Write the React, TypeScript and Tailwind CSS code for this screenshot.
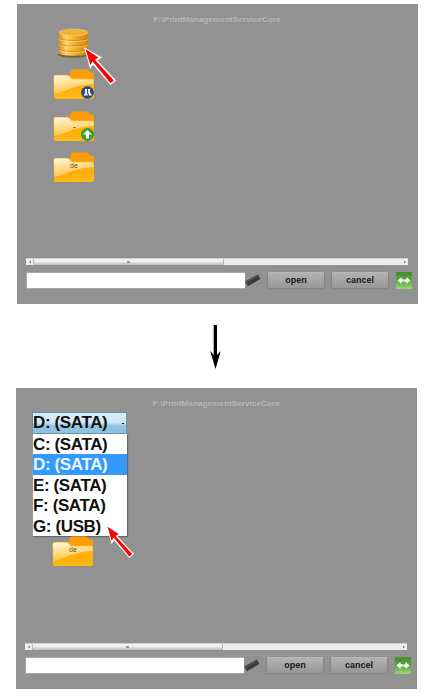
import React from "react";

function Database() {
  return (
    <svg className="block h-[31px] w-[33px]" viewBox="0 0 33 31">
      <defs>
        <linearGradient id="gold" x1="0" x2="1">
          <stop offset="0" stopColor="#d98f14" />
          <stop offset=".25" stopColor="#ffd56a" />
          <stop offset=".5" stopColor="#f7b32c" />
          <stop offset="1" stopColor="#c98212" />
        </linearGradient>
      </defs>
      <ellipse cx="15.500" cy="26.500" rx="15.5" ry="3.200" fill="#6b4a1c" opacity=".7" />
      <path d="M1 5V25C1 28.700 30 28.700 30 25V5Z" fill="url(#gold)" />
      <g fill="none">
        <path d="M1 10C1 13.200 30 13.200 30 10M1 15.500C1 18.700 30 18.700 30 15.500M1 21C1 24.200 30 24.200 30 21" stroke="#c07c14" strokeWidth=".7" />
        <path d="M1 11C1 14.200 30 14.200 30 11M1 16.500C1 19.700 30 19.700 30 16.500M1 22C1 25.200 30 25.200 30 22" stroke="#ffe08c" strokeWidth=".6" />
      </g>
      <ellipse cx="15.5" cy="4.500" rx="14.5" ry="3.3" fill="#f3b136" stroke="#f9d06c" strokeWidth=".7" />
    </svg>
  );
}

function Folder({ badge, label }: { badge?: "tools" | "up"; label?: string }) {
  return (
    <div className="relative h-[31px] w-[42px]">
      <svg className="block h-[31px] w-[42px]" viewBox="0 0 42 31">
        <defs>
          <linearGradient id="front" x1="0" y1="0" x2="0" y2="1">
            <stop offset="0" stopColor="#ffc02c" />
            <stop offset=".6" stopColor="#ffad08" />
            <stop offset="1" stopColor="#ffba18" />
          </linearGradient>
          <linearGradient id="shine" x1="0" y1="0" x2=".3" y2="1">
            <stop offset="0" stopColor="#fff8dc" />
            <stop offset="1" stopColor="#ffc445" />
          </linearGradient>
        </defs>
        <path d="M16 8L18 2Q18.500 0.500 20 0.500H34Q35.500 0.500 36 2L37 3.500H39.500Q41 3.500 41 5V14H16Z" fill="#ff9d05" />
        <path d="M.5 8Q.5 6 2.500 6H14.500Q16 6 17 7.500L18.500 9Q19 9.500 20 9.500H39Q41 9.500 41 11.500V28Q41 30 39 30H3Q1 30 1 28Z" fill="url(#front)" />
        <path d="M1 8Q1 6.500 2.500 6.500H14.500Q15.600 6.500 16.500 8L18 9.500Q18.500 10.200 20 10.200H39Q40.500 10.200 40.500 12V15Q27 15.500 18 19.500Q10 23 1.500 25Z" fill="url(#shine)" />
      </svg>
      {badge && (
        <svg className="absolute top-[17px] left-[28px] size-[13px]" viewBox="0 0 13 13">
          <circle cx="6.500" cy="6.500" r="6" fill={badge === "up" ? "#37a43c" : "#274c85"} stroke={badge === "up" ? "#2e7d28" : "#34466a"} strokeWidth=".7" />
          {badge === "up" ? (
            <path d="M6.500 2L10.700 6.500H8V10.500H5V6.500H2.300Z" fill="#fff" />
          ) : (
            <path d="M4 3H6V7L7 9.500H2.500L4 7ZM7 3H9V6L11 9.500H8L7 6Z" fill="#e4edf8" />
          )}
        </svg>
      )}
      {badge === "up" && <i className="absolute top-4 left-[20px] h-px w-[3px] bg-[#a07420]" />}
      {label && (
        <span className="absolute top-[9px] left-[17px] text-[7px] leading-[10px] text-[#65531f]">{label}</span>
      )}
    </div>
  );
}

function Pointer({ className }: { className: string }) {
  return (
    <svg className={"absolute " + className} viewBox="0 0 33 38">
      <path d="M0 0L18 10.500L13.300 13.200L32 33.500L26.500 38L9 17.500L6.200 22Z" fill="#fff" />
      <path d="M1.500 2L14.500 10.500L10.800 12.800L30 33.500L26.500 36.200L8.700 14.500L6.300 18Z" fill="#f50505" />
    </svg>
  );
}

function Swap() {
  return (
    <div className="ml-[7px] flex h-[17px] w-4 items-center justify-center bg-linear-to-b from-[#468c31] via-[#58a63d] to-[#9bd777]">
      <svg className="h-[9px] w-3.5" viewBox="0 0 14 9">
        <path d="M0.500 4.500L4.500 1V3.300H9.500V1L13.500 4.500L9.500 8V5.700H4.500V8Z" fill="#fff" />
        <path d="M6 6L8 3" stroke="#60a74b" strokeWidth=".8" />
      </svg>
    </div>
  );
}

function Controls() {
  const button =
    "flex h-[17px] w-[58px] items-center justify-center rounded-[2px] border border-[#858585] border-t-[#b8b8b8] bg-linear-to-b from-[#b2b2b2] to-[#979797] text-[9px] font-bold leading-none text-[#181818] shadow-[0_0_1px_#777]";
  return (
    <div className="ml-[9px]">
      <div className="flex h-[7px] w-[382px] items-center border-t border-[#d0d0d0] bg-[#ededed]">
        <div className="flex w-[7px] justify-center">
          <i className="block border-y-[1.5px] border-r-2 border-y-transparent border-r-[#555]" />
        </div>
        <div className="flex h-1.5 w-[191px] items-center justify-center border-x border-[#b8b8b8] bg-linear-to-b from-[#f0f0f0] from-40% to-[#b9b9b9]">
          <i className="block h-[2px] w-[3px] bg-[#999]" />
        </div>
        <div className="ml-auto flex w-[7px] justify-center">
          <i className="block border-y-[1.5px] border-l-2 border-y-transparent border-l-[#555]" />
        </div>
      </div>
      <div className="mt-[7px] flex">
        <div className="h-[17px] w-[219px] border border-r-0 border-[#aaa] bg-white" />
        <svg className="h-[17px] w-4" viewBox="0 0 16 17">
          <path d="M0.300 9.500L13 2.500L15.300 7L2.800 14.200Z" fill="#393939" />
          <path d="M0.300 9.500L13 2.500L13.900 4.200L1.300 11.200Z" fill="#505050" />
        </svg>
        <div className={button + " ml-[6px]"}>open</div>
        <div className={button + " ml-[6px]"}>cancel</div>
        <Swap />
      </div>
    </div>
  );
}

function Title() {
  return (
    <div className="h-6 pt-[10px] pl-[136.5px] text-[8px] leading-[12px] font-bold tracking-[0.13px] whitespace-nowrap text-[#b8b5bf]">
      F:\PrintManagementServiceCore
    </div>
  );
}

const drives = ["C: (SATA)", "D: (SATA)", "E: (SATA)", "F: (SATA)", "G: (USB)"];

export default function App() {
  return (
    <main className="h-[697px] w-[430px] overflow-hidden bg-white pt-1 font-['Liberation_Sans',Arial,sans-serif]">
      <section className="relative ml-[17px] flex h-[300px] w-[401px] flex-col bg-[#929292]">
        <Title />
        <div className="flex h-[230px] flex-col pl-[36px]">
          <div className="ml-[5px] h-[41px]">
            <Database />
          </div>
          <div className="flex flex-col gap-[10.5px]">
            <Folder badge="tools" />
            <Folder badge="up" />
            <Folder label="de" />
          </div>
        </div>
        <Controls />
        <Pointer className="top-[43px] left-[67px] h-[38px] w-[33px]" />
      </section>

      <div className="flex h-[84px] pt-[21px] pl-[210px]">
        <svg className="h-[44px] w-[11px]" viewBox="0 0 11 44">
          <path d="M3.700 0H7V30L10.800 26L5.500 44L.2 26L3.700 30Z" fill="#000" />
        </svg>
      </div>

      <section className="relative ml-4 flex h-[301px] w-[401px] flex-col bg-[#929292]">
        <Title />
        <div className="h-[231px] pl-4">
          <div className="w-[95px] text-[17px] font-bold tracking-[-0.38px] text-[#111]">
            <div className="flex h-[22px] items-center justify-between border border-[#6594ad] bg-linear-to-b from-[#d5eaf5] from-45% to-[#8fc3df] to-65% pr-0.5 leading-[20px]">
              <span>D: (SATA)</span>
              <i className="block h-px w-0.5 bg-[#222]" />
            </div>
            <div className="h-[102px] border-l border-[#999] bg-white shadow-[1px_1px_1px_#666]">
              {drives.map((drive, index) => (
                <div
                  key={drive}
                  className={"h-[20.4px] leading-[21px] whitespace-nowrap " + (index === 1 ? "bg-[#3399ff] text-[#eaf7ff]" : "")}
                >
                  {drive}
                </div>
              ))}
            </div>
          </div>
          <div className="ml-5">
            <Folder label="de" />
          </div>
        </div>
        <Controls />
        <Pointer className="top-[137px] left-[90px] h-[33px] w-[29px]" />
      </section>
    </main>
  );
}
